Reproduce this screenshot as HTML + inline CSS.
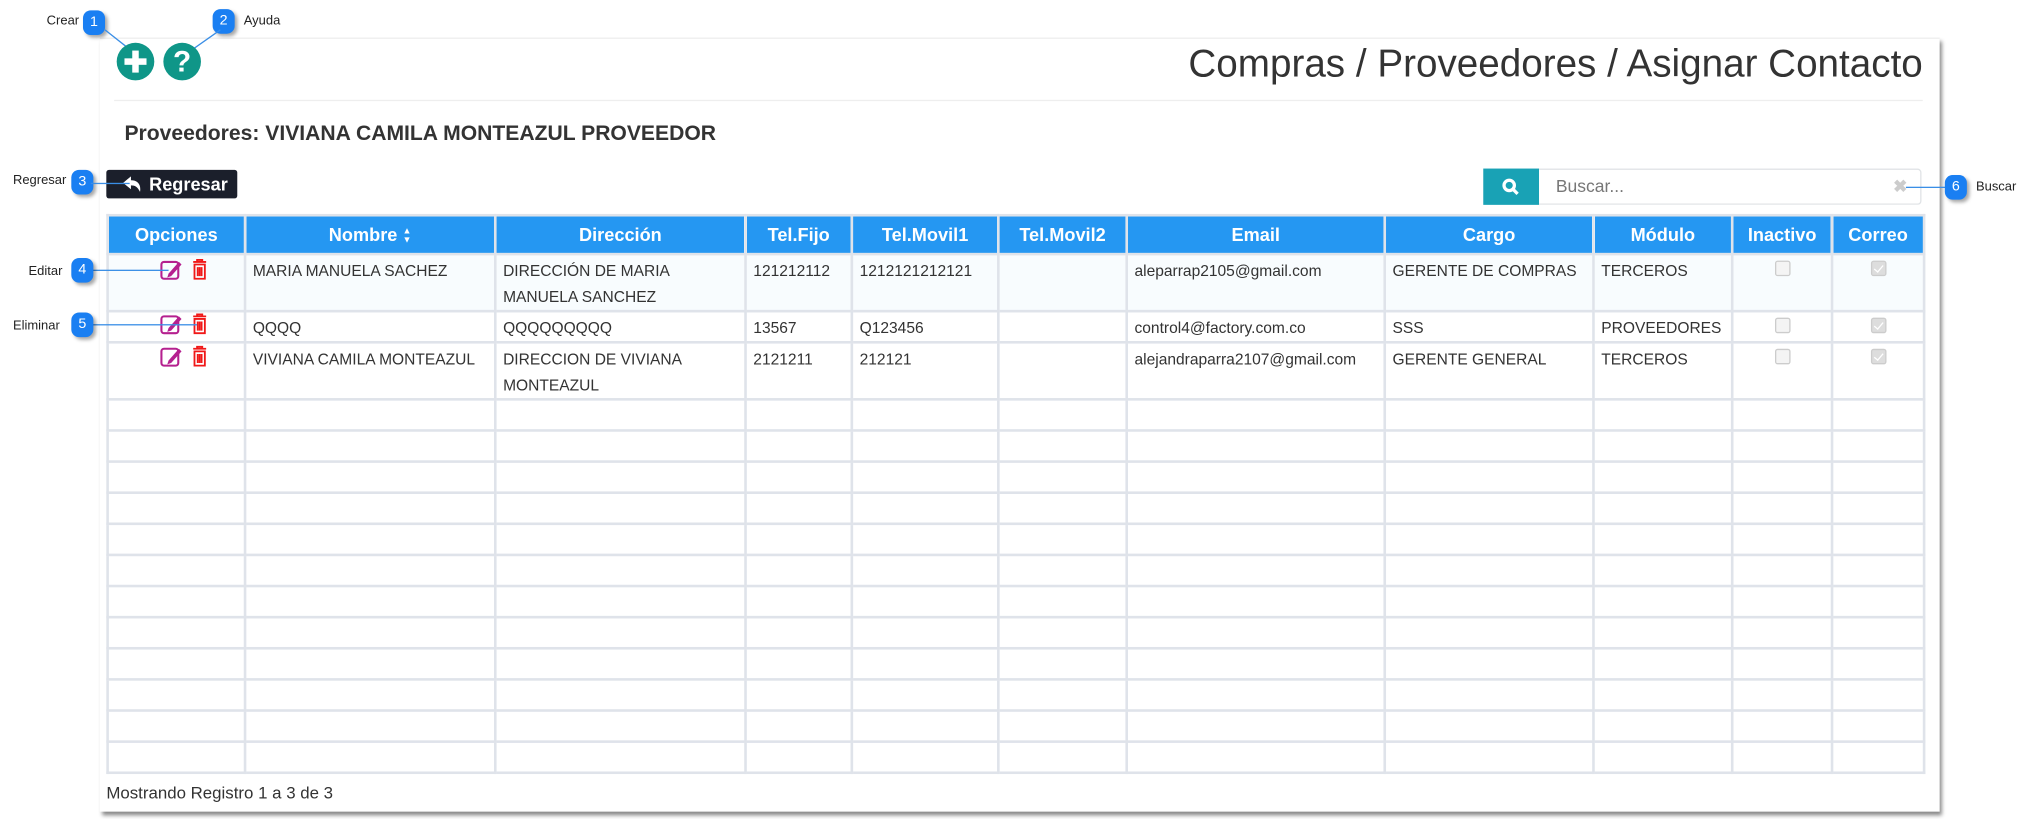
<!DOCTYPE html>
<html><head><meta charset="utf-8"><style>
html,body{margin:0;padding:0;background:#fff;width:2033px;height:819px;overflow:hidden}
#w{position:absolute;left:0;top:0;width:1568px;height:632px;transform:scale(1.29656);transform-origin:0 0;font-family:"Liberation Sans",sans-serif;color:#333}
.abs{position:absolute}
.panel{left:77px;top:29px;width:1419px;height:596px;border-top:1px solid #eee;box-shadow:2px 3px 3px #888;background:#fff}
.badge{position:absolute;width:17px;height:19px;background:#1a7ff2;border-radius:6px;color:#fff;font-size:11px;text-align:center;line-height:19px;box-shadow:2px 2px 3px rgba(0,0,0,.35)}
.lbl{position:absolute;font-size:10px;color:#222}
.circ{position:absolute;width:29px;height:29px;border-radius:50%;background:#0f9688;color:#fff;text-align:center;font-weight:bold}
table{position:absolute;left:82px;top:165px;width:1401px;border-collapse:collapse;font-size:12px;table-layout:fixed}
td,th{border:2px solid #dfe3ea;padding:0 5px;vertical-align:top;line-height:20px;overflow:hidden}
th{background:#2597f2;color:#fff;font-size:14px;height:28px;vertical-align:middle;text-align:center;border-color:#dfe3ea;white-space:nowrap}
td{height:20px;padding-top:2px}
.cb{display:block;margin:2px auto 0;width:10px;height:10px;border:1px solid #ccc;border-radius:2px;background:#f4f4f4}
.cb.k{background:#ddd;position:relative}
.cb.k:after{content:"";position:absolute;left:3px;top:1px;width:3px;height:6px;border:solid #fff;border-width:0 1.5px 1.5px 0;transform:rotate(40deg)}
.hl{position:absolute;height:1px;background:#3a8ee6}
.sort{display:inline-block;vertical-align:middle;font-size:7px;line-height:7px;margin-left:4px}
</style></head><body><div id="w">
<div class="abs panel"></div>
<div class="lbl" style="left:36px;top:11px">Crear</div>
<div class="badge" style="left:64px;top:8px">1</div>
<div class="badge" style="left:164px;top:7px">2</div>
<div class="lbl" style="left:188px;top:11px">Ayuda</div>
<svg class="abs" style="left:78px;top:20px" width="110" height="20"><line x1="3" y1="3" x2="27" y2="22" stroke="#3a8ee6"/><line x1="92" y1="3" x2="65" y2="22" stroke="#3a8ee6"/></svg>
<div class="circ" style="left:90px;top:33px"><svg width="29" height="29"><rect x="12" y="6" width="5" height="17" fill="#fff"/><rect x="6" y="12" width="17" height="5" fill="#fff"/></svg></div>
<div class="circ" style="left:126px;top:33px;font-size:23px;line-height:29px">?</div>
<div class="abs" style="right:85px;top:33px;font-size:29.8px;color:#333">Compras / Proveedores / Asignar Contacto</div>
<div class="abs" style="left:88px;top:77px;width:1395px;height:1px;background:#eee"></div>
<div class="abs" style="left:96px;top:94px;font-size:16.3px;font-weight:bold;color:#333">Proveedores: VIVIANA CAMILA MONTEAZUL PROVEEDOR</div>
<div class="lbl" style="left:10px;top:134px">Regresar</div>
<div class="badge" style="left:55px;top:131px">3</div>
<div class="abs" style="left:82px;top:131px;width:101px;height:22px;background:#1b1f2b;border-radius:2px;color:#fff;font-weight:bold;font-size:14px;line-height:22px"><svg style="position:absolute;left:12px;top:4px" width="16" height="14"><path d="M1 6 L7 1 V4 C12 4 15 7 14 13 C12 9 10 8 7 8 V11 Z" fill="#fff"/></svg><span style="position:absolute;left:33px">Regresar</span></div>
<div class="hl" style="left:70px;top:141px;width:30px"></div>
<div class="abs" style="left:1144px;top:130px;width:43px;height:28px;background:#19a2b5"><svg style="position:absolute;left:14px;top:7px" width="14" height="14"><circle cx="6" cy="6" r="4" stroke="#fff" stroke-width="2.5" fill="none"/><line x1="9" y1="9" x2="12.5" y2="12.5" stroke="#fff" stroke-width="2.5"/></svg></div>
<div class="abs" style="left:1187px;top:130px;width:294px;height:26px;border:1px solid #e0e3e6;border-left:none;border-radius:0 3px 3px 0;font-size:13.5px;color:#777;line-height:26px"><span style="margin-left:13px">Buscar...</span><span style="position:absolute;right:10px;top:0;color:#ccc;font-size:13px;font-weight:bold">✖</span></div>
<div class="hl" style="left:1470px;top:144px;width:32px"></div>
<div class="badge" style="left:1500px;top:135px">6</div>
<div class="lbl" style="left:1524px;top:139px">Buscar</div>
<table>
<colgroup><col style="width:106px"><col style="width:193px"><col style="width:193px"><col style="width:82px"><col style="width:113px"><col style="width:99px"><col style="width:199px"><col style="width:161px"><col style="width:107px"><col style="width:77px"><col style="width:71px"></colgroup>
<tr><th>Opciones</th><th>Nombre<span class="sort">▲<br>▼</span></th><th>Dirección</th><th>Tel.Fijo</th><th>Tel.Movil1</th><th>Tel.Movil2</th><th>Email</th><th>Cargo</th><th>Módulo</th><th>Inactivo</th><th>Correo</th></tr>
<tr style="background:#f8fcfe"><td style="height:40px"></td><td>MARIA MANUELA SACHEZ</td><td>DIRECCIÓN DE MARIA MANUELA SANCHEZ</td><td>121212112</td><td>1212121212121</td><td></td><td>aleparrap2105@gmail.com</td><td>GERENTE DE COMPRAS</td><td>TERCEROS</td><td><span class="cb"></span></td><td><span class="cb k"></span></td></tr>
<tr><td></td><td>QQQQ</td><td>QQQQQQQQQ</td><td>13567</td><td>Q123456</td><td></td><td>control4@factory.com.co</td><td>SSS</td><td>PROVEEDORES</td><td><span class="cb"></span></td><td><span class="cb k"></span></td></tr>
<tr><td style="height:40px"></td><td style="white-space:nowrap">VIVIANA CAMILA MONTEAZUL</td><td>DIRECCION DE VIVIANA MONTEAZUL</td><td>2121211</td><td>212121</td><td></td><td>alejandraparra2107@gmail.com</td><td>GERENTE GENERAL</td><td>TERCEROS</td><td><span class="cb"></span></td><td><span class="cb k"></span></td></tr>
<tr><td></td><td></td><td></td><td></td><td></td><td></td><td></td><td></td><td></td><td></td><td></td></tr>
<tr><td></td><td></td><td></td><td></td><td></td><td></td><td></td><td></td><td></td><td></td><td></td></tr>
<tr><td></td><td></td><td></td><td></td><td></td><td></td><td></td><td></td><td></td><td></td><td></td></tr>
<tr><td></td><td></td><td></td><td></td><td></td><td></td><td></td><td></td><td></td><td></td><td></td></tr>
<tr><td></td><td></td><td></td><td></td><td></td><td></td><td></td><td></td><td></td><td></td><td></td></tr>
<tr><td></td><td></td><td></td><td></td><td></td><td></td><td></td><td></td><td></td><td></td><td></td></tr>
<tr><td></td><td></td><td></td><td></td><td></td><td></td><td></td><td></td><td></td><td></td><td></td></tr>
<tr><td></td><td></td><td></td><td></td><td></td><td></td><td></td><td></td><td></td><td></td><td></td></tr>
<tr><td></td><td></td><td></td><td></td><td></td><td></td><td></td><td></td><td></td><td></td><td></td></tr>
<tr><td></td><td></td><td></td><td></td><td></td><td></td><td></td><td></td><td></td><td></td><td></td></tr>
<tr><td></td><td></td><td></td><td></td><td></td><td></td><td></td><td></td><td></td><td></td><td></td></tr>
<tr><td></td><td></td><td></td><td></td><td></td><td></td><td></td><td></td><td></td><td></td><td></td></tr>
</table>
<svg class="abs" style="left:123px;top:199px" width="40" height="18"><rect x="1.5" y="3" width="13" height="13" rx="2" fill="none" stroke="#b5208f" stroke-width="1.6"/><path d="M7 12 L15 3 L17 5 L9 14 L6 15 Z" fill="#b5208f"/><path d="M26 3 h10 M29 3 v-1.5 h4 v1.5 M27 5 h8 v11 h-8 Z M29.5 7 v7 M31 7 v7 M32.5 7 v7" fill="none" stroke="#f01818" stroke-width="1.4"/></svg>
<svg class="abs" style="left:123px;top:241px" width="40" height="18"><rect x="1.5" y="3" width="13" height="13" rx="2" fill="none" stroke="#b5208f" stroke-width="1.6"/><path d="M7 12 L15 3 L17 5 L9 14 L6 15 Z" fill="#b5208f"/><path d="M26 3 h10 M29 3 v-1.5 h4 v1.5 M27 5 h8 v11 h-8 Z M29.5 7 v7 M31 7 v7 M32.5 7 v7" fill="none" stroke="#f01818" stroke-width="1.4"/></svg>
<svg class="abs" style="left:123px;top:266px" width="40" height="18"><rect x="1.5" y="3" width="13" height="13" rx="2" fill="none" stroke="#b5208f" stroke-width="1.6"/><path d="M7 12 L15 3 L17 5 L9 14 L6 15 Z" fill="#b5208f"/><path d="M26 3 h10 M29 3 v-1.5 h4 v1.5 M27 5 h8 v11 h-8 Z M29.5 7 v7 M31 7 v7 M32.5 7 v7" fill="none" stroke="#f01818" stroke-width="1.4"/></svg>
<div class="hl" style="left:70px;top:208px;width:60px"></div>
<div class="hl" style="left:70px;top:250px;width:82px"></div>
<div class="lbl" style="left:22px;top:204px">Editar</div>
<div class="badge" style="left:55px;top:199px">4</div>
<div class="lbl" style="left:10px;top:246px">Eliminar</div>
<div class="badge" style="left:55px;top:241px">5</div>
<div class="abs" style="left:82px;top:604px;font-size:13px;color:#333">Mostrando Registro 1 a 3 de 3</div>
</div></body></html>
